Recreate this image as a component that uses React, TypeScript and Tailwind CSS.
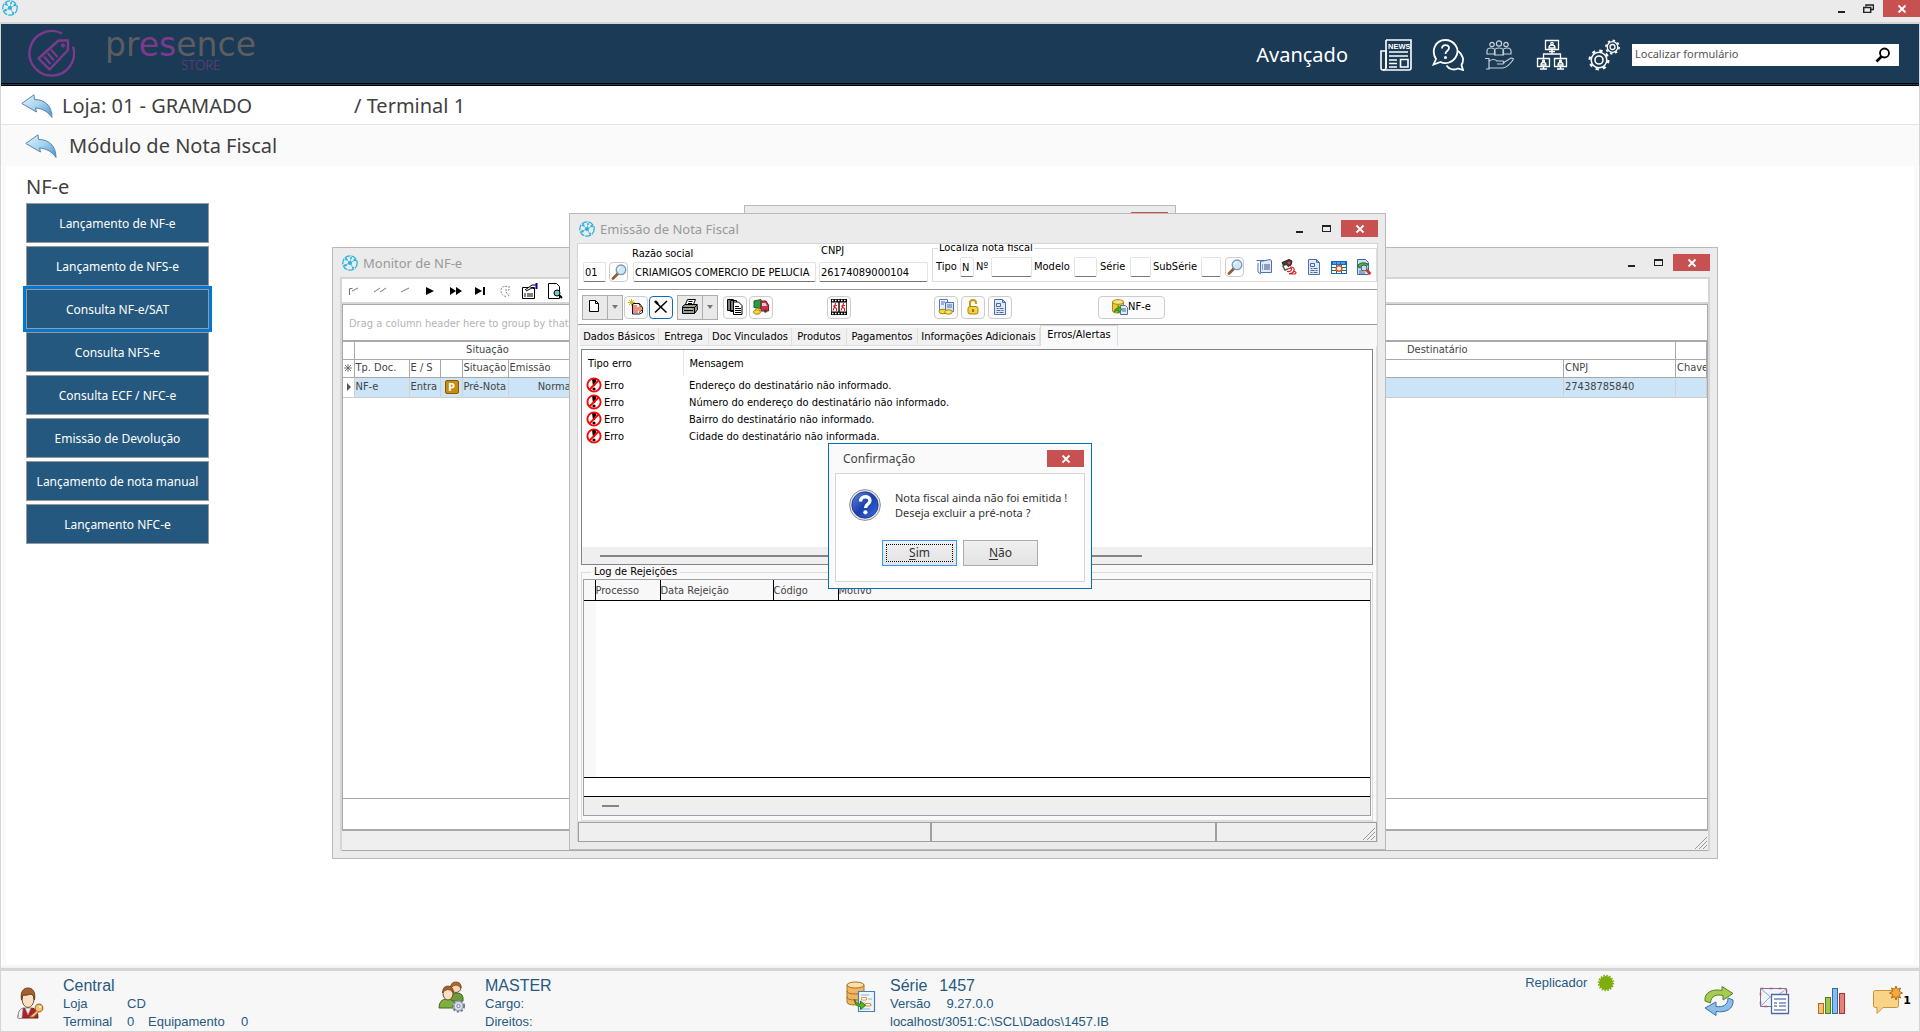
import type { ReactNode } from 'react';

interface WindowProps {
  title: string;
  className: string;
  children: ReactNode;
}

interface FieldProps {
  id: string;
  label: string;
  labelClass: string;
  inputClass: string;
  value?: string;
}

const menuItems = [
  'Lançamento de NF-e',
  'Lançamento de NFS-e',
  'Consulta NF-e/SAT',
  'Consulta NFS-e',
  'Consulta ECF / NFC-e',
  'Emissão de Devolução',
  'Lançamento de nota manual',
  'Lançamento NFC-e',
];

const tabs = [
  'Dados Básicos',
  'Entrega',
  'Doc Vinculados',
  'Produtos',
  'Pagamentos',
  'Informações Adicionais',
  'Erros/Alertas',
];

const errors = [
  'Endereço do destinatário não informado.',
  'Número do endereço do destinatário não informado.',
  'Bairro do destinatário não informado.',
  'Cidade do destinatário não informada.',
];

/* ---------- icons ---------- */

function AppIcon() {
  return (
    <svg className="w-4 h-4 shrink-0" viewBox="0 0 16 16" fill="none" stroke="#2bb3df">
      <circle cx="8" cy="8" r="7.2" strokeWidth="1.3" strokeDasharray="6 1" />
      <path d="M8 8 4 4M8 8l5-3M8 8l3 5M8 8l-5 2M8 8l1-5" strokeWidth="0.7" />
      <g fill="#2bb3df" stroke="none">
        <circle cx="8" cy="8" r="2.1" />
        <circle cx="4.2" cy="4.2" r="1.2" />
        <circle cx="12.8" cy="5" r="1.3" />
        <circle cx="11" cy="12.8" r="1.1" />
        <circle cx="3.4" cy="10.2" r="1.3" />
        <circle cx="9" cy="3" r="1" />
      </g>
    </svg>
  );
}

function TagLogo() {
  return (
    <svg className="w-12 h-12" viewBox="0 0 48 48" fill="none" stroke="#7d3a8c" strokeWidth="2.4">
      <path d="M35 4.5A22.3 22.3 0 1 0 46 17.5" />
      <path d="M11.5 29.500 31.500 11.500h9.500v9.500L22.500 40.500Z" strokeLinejoin="round" />
      <path d="m17 27.500 6.500 7.500M20.500 24l6.500 7.500M24 20.500l6.500 7.500" strokeWidth="2" />
      <circle cx="36" cy="16.500" r="0.900" />
    </svg>
  );
}

function BackArrow() {
  return (
    <svg className="w-8 h-6" viewBox="0 0 32 24">
      <defs>
        <linearGradient id="back" x1="0" y1="0" x2="1" y2="1">
          <stop offset="0" stopColor="#dff5fb" />
          <stop offset="0.5" stopColor="#a5d3ee" />
          <stop offset="1" stopColor="#4f8fc8" />
        </linearGradient>
      </defs>
      <path
        d="M.8 9.500 13 .8l.5 4.700C23 5.500 31 11 31 23.500 27 18 22 14.500 14.500 14l1 4Z"
        fill="url(#back)"
        stroke="#5b83b4"
        strokeLinejoin="round"
      />
    </svg>
  );
}

function NewsIcon() {
  return (
    <svg className="w-8 h-8" viewBox="0 0 32 32" fill="none" stroke="#fff" strokeWidth="1.6">
      <path d="M6 1h25v28q0 2-2 2H3q-2 0-2-2V12h5v17" />
      <path d="M6 1v28q0 2-3 2" />
      <text x="8" y="9.500" fontSize="7.500" fontWeight="700" fill="#fff" stroke="none" fontFamily="Liberation Sans, sans-serif">
        NEWS
      </text>
      <path d="M9 13h19M9 17h19M9 21h8M9 24.500h8M9 28h8M20.500 20.500H28V28h-7.500Z" />
    </svg>
  );
}

function HelpIcon() {
  return (
    <svg className="w-8 h-8" viewBox="0 0 32 32" fill="none" stroke="#fff" strokeWidth="1.8">
      <path d="M4 20C-1.500 11 4 1 13 1s16 9 10.500 17.500C20 24 13 25.500 8.500 23L1.500 25.500Z" />
      <path d="M26 12c5 3.500 6.500 9 3.500 14l1.500 5-5-1.500c-4 2-9 1-11.500-3" />
      <path d="M10 9.500c0-4.500 7-4.500 7-.5 0 3-3.500 2.500-3.500 6" />
      <circle cx="13.500" cy="18.500" r="0.7" fill="#fff" />
    </svg>
  );
}

function HandIcon() {
  return (
    <svg className="w-8 h-8" viewBox="0 0 32 32" fill="none" stroke="#c6d0d8" strokeWidth="1.2">
      <circle cx="8" cy="5.500" r="2.200" />
      <circle cx="15" cy="4.500" r="2.600" />
      <circle cx="22" cy="5.500" r="2.200" />
      <path d="M3 15v-3q0-3 4-3t4 3v3ZM19 15v-3q0-3 4-3t4 3v3ZM10.500 16v-4q0-3 4.500-3t4.500 3v4Z" />
      <path d="M1 19.500h4V30H2M5 22q5-3 8 0h6q2 2 0 3h-6M19 24l8-5q3 0 2 2-5 7-10 8H5" />
    </svg>
  );
}

function NetworkIcon() {
  return (
    <svg className="w-8 h-8" viewBox="0 0 32 32" fill="none" stroke="#fff" strokeWidth="1.3">
      <path d="M9.500 1.500h13v9h-13ZM1.500 19.500h12v8h-12ZM18.500 19.500h12v8h-12Z" />
      <path d="M16 11v4M7.500 19v-4h17v4M13 12.500h6M4 30h7M21 30h7M7.500 27.500V30M24.500 27.500V30" />
      <path d="M13 9q0-3 3-3t3 3ZM5 26q0-2.500 2.500-2.500T10 26ZM22 26q0-2.500 2.500-2.500T27 26Z" />
      <circle cx="16" cy="4.500" r="1.200" />
      <circle cx="7.500" cy="22" r="1" />
      <circle cx="24.500" cy="22" r="1" />
    </svg>
  );
}

function GearsIcon() {
  return (
    <svg className="w-8 h-8" viewBox="0 0 32 32" fill="none" stroke="#fff">
      <circle cx="11" cy="21" r="7.800" strokeWidth="1.500" />
      <circle cx="11" cy="21" r="9.400" strokeWidth="2.200" strokeDasharray="3.300 4.080" />
      <circle cx="11" cy="21" r="4" strokeWidth="1.600" />
      <circle cx="24.500" cy="8" r="5.300" strokeWidth="1.300" />
      <circle cx="24.500" cy="8" r="6.600" strokeWidth="1.600" strokeDasharray="2.400 2.780" />
      <circle cx="24.500" cy="8" r="2.500" strokeWidth="1.300" />
    </svg>
  );
}

function Lens() {
  return (
    <svg className="w-4 h-4" viewBox="0 0 16 16">
      <path d="m2 14.500 5-5" stroke="#9a5a2c" strokeWidth="2.800" strokeLinecap="round" />
      <path d="m5.500 10.500 1.800-1.800" stroke="#666" strokeWidth="2" />
      <circle cx="10" cy="5.800" r="4.800" fill="#c9e9fa" stroke="#8496ab" strokeWidth="1.300" />
      <path d="M7.500 5.500q0-2.500 2.500-2.500" stroke="#fff" fill="none" strokeWidth="1.200" />
    </svg>
  );
}

function DocIcon() {
  return (
    <svg className="w-4 h-4" viewBox="0 0 16 16">
      <path d="M2.500.5h8l3 3v12h-11Z" fill="#dfeafc" stroke="#4a70b5" />
      <path d="M10.500.5v3h3Z" fill="#8db1ec" stroke="#4a70b5" />
      <path d="M4.500 4.500h4v3h-4ZM4.500 9.500h2m1 0h4m-7 2h4m1 0h2m-7 2h2m1 0h4" stroke="#55658c" fill="none" />
    </svg>
  );
}

function CoinDocIcon() {
  return (
    <svg className="w-4 h-4" viewBox="0 0 16 16">
      <path d="M1.500.5h8v10h-8Z" fill="#e6effd" stroke="#5a7dbb" />
      <path d="M7.500 3.500h8v9h-8Z" fill="#d3e2fa" stroke="#4a70b5" />
      <path d="M3 3h4M3 5h3M9 6h5M9 8h5" stroke="#55709c" />
      <ellipse cx="5" cy="12.500" rx="4" ry="2.300" fill="#f5d84a" stroke="#a98608" />
      <ellipse cx="10.500" cy="13" rx="3.800" ry="2.200" fill="#f8e169" stroke="#a98608" />
    </svg>
  );
}

function PadlockIcon() {
  return (
    <svg className="w-4 h-4" viewBox="0 0 16 16">
      <path d="M5 7V4q0-3 3-3t3 3v1" fill="none" stroke="#c89b12" strokeWidth="2" />
      <rect x="3" y="7.500" width="10" height="7.500" rx="2" fill="#f4cf3e" stroke="#ad8410" />
      <path d="M8 10v3" stroke="#805c00" strokeWidth="1.500" />
    </svg>
  );
}

function DbDocIcon() {
  return (
    <svg className="w-4 h-4" viewBox="0 0 16 16">
      <path d="M.5 3v9q0 2 5 2t6-2V3Z" fill="#f1c62c" stroke="#a98608" />
      <ellipse cx="6" cy="3" rx="5.500" ry="2.300" fill="#fbe788" stroke="#a98608" />
      <path d="M8.500 6.500h5l2 2v7h-7Z" fill="#dfeafc" stroke="#4a70b5" />
      <path d="M10 10h4M10 12h4" stroke="#55658c" />
      <path d="M2 13q1-4 4-4V6.500l4 4-4 3.500v-2.500q-2 0-4 1.500Z" fill="#3eb03a" stroke="#17721a" strokeWidth="0.700" />
    </svg>
  );
}

function SheetsIcon() {
  return (
    <svg className="w-4 h-4" viewBox="0 0 16 16">
      <path d="M.5 1.500h10v1M2 4v9l3 2" fill="none" stroke="#4a70b5" />
      <path d="M4.500 2.500 14 .5l1.500 1v12h-11Z" fill="#dfeafc" stroke="#4a70b5" />
      <path d="M6 6h1M6 8h1M6 10h1M8 6h6M8 8h6M8 10h6" stroke="#444d7c" />
    </svg>
  );
}

function ScannerIcon() {
  return (
    <svg className="w-4 h-4" viewBox="0 0 16 16">
      <path d="M1 3.500 8 .5l3 1.500-1 4-3 1.500-1.500-2-3 1Z" fill="#4a4038" stroke="#222" />
      <circle cx="8" cy="4" r="1.300" fill="#f33" />
      <path d="M1.500 6.500 4 11l3-1" fill="none" stroke="#555" strokeWidth="1.500" />
      <path d="M7 10q4-2 3.500.5T6 12.500M9 8q5 0 4 3.500T8 14.500M12.500 12q4 1 1.500 3H8" fill="none" stroke="#d9232a" strokeWidth="1.200" />
    </svg>
  );
}

function CalendarIcon() {
  return (
    <svg className="w-4 h-4" viewBox="0 0 16 16">
      <rect x="0.500" y="2.500" width="15" height="12" fill="#fff" stroke="#0a6ccc" />
      <path d="M0 2h16v4H0Z" fill="#0a6ccc" />
      <path d="M2 4h3M6 4h3M10 4h4" stroke="#9fd0ff" />
      <path d="M1 8.500h14M1 11.500h14M5.500 6v8M10.500 6v8" stroke="#16783a" />
      <circle cx="8" cy="9.500" r="2.800" fill="#fff" stroke="#ef4d21" strokeWidth="1.500" />
    </svg>
  );
}

function SearchDocIcon() {
  return (
    <svg className="w-4 h-4" viewBox="0 0 16 16">
      <path d="M1.500.5h8l3 3v12h-11Z" fill="#cfe2fa" stroke="#3a68ae" />
      <path d="M2 6q4-4 10-1l-2 3Q6 6 3 9Z" fill="#4bb24a" stroke="#1d7022" />
      <path d="M3 12h4M3 14h6" stroke="#55658c" />
      <circle cx="8" cy="9" r="3" fill="#c8e3df" stroke="#456" />
      <path d="m10.500 11 4 4" stroke="#d6321f" strokeWidth="2.500" />
    </svg>
  );
}

function NewFileIcon() {
  return (
    <svg className="w-4 h-4" viewBox="0 0 16 16">
      <path d="M2.500 1.500h6l3 3v8h-9Z" fill="#fff" stroke="#000" />
      <path d="M8.500 1.500v3h3" fill="none" stroke="#000" />
    </svg>
  );
}

function EditIcon() {
  return (
    <svg className="w-4 h-4" viewBox="0 0 16 16">
      <path d="M4.500 4.500h7l3 4v5l-3 1.500h-7Z" fill="#fff" stroke="#111" />
      <path d="M5 7h4M5 9h6M5 11h6M5 13h5" stroke="#e01818" />
      <path d="m11 5 4 5-4 4" fill="#e9a25e" stroke="#111" strokeDasharray="1.500 1" />
      <path d="M3.500 0v7M0 3.500h7M1 1l5 5M6 1 1 6" stroke="#c4b800" strokeWidth="0.900" />
    </svg>
  );
}

function DeleteIcon() {
  return (
    <svg className="w-4 h-4" viewBox="0 0 16 16">
      <path d="M2 2.500 13.500 13.500M14 2 2 13.500" stroke="#000" strokeWidth="1.500" />
      <path d="m2 2 3 3" stroke="#000" strokeWidth="2.400" />
    </svg>
  );
}

function PrinterIcon() {
  return (
    <svg className="w-4 h-4" viewBox="0 0 16 16" stroke="#000">
      <path d="M5.500.5h8l-2.500 6H3Z" fill="#fff" />
      <path d="M.5 7.500 3 5.500h12l.5 5-3 4H.5Z" fill="#9a9a9a" />
      <path d="M.5 8.500h12l3-3M12.500 8.500v6M2 11.500h9M6.500 2.500h4M6 4.500h4" fill="none" />
      <path d="M7 10h3" stroke="#e6d800" />
    </svg>
  );
}

function CopiesIcon() {
  return (
    <svg className="w-4 h-4" viewBox="0 0 16 16" stroke="#000">
      <path d="M.5.5h6v11h-6ZM3.500 1.500h6v11h-6Z" fill="#fff" />
      <path d="M2 .5v11M5 2v10" />
      <path d="M6.500 3h5l3.500 3.500v9H6.500Z" fill="#fff" />
      <path d="M8 7.500h4M8 9.500h6M8 11.500h6M8 13.500h6" />
    </svg>
  );
}

function TruckIcon() {
  return (
    <svg className="w-4 h-4" viewBox="0 0 16 16">
      <path d="M1 2 8 .5v9L1 8.500Z" fill="#2c9b42" stroke="#166326" />
      <path d="M8 2h5l2.500 4v6H8Z" fill="#d8303a" stroke="#8c1820" />
      <path d="M9 4h3.500l1.500 3H9Z" fill="#bcd8f5" />
      <circle cx="12.500" cy="12" r="1.800" fill="#444" />
      <ellipse cx="4" cy="13" rx="3.500" ry="2.200" fill="#f7d548" stroke="#a98608" />
      <path d="M2 10.500 6 9v3" fill="#f7d548" stroke="#a98608" />
    </svg>
  );
}

function FilmIcon() {
  return (
    <svg className="w-4 h-4" viewBox="0 0 16 16">
      <path d="M0 0h16v16H0Z" fill="#000" />
      <path d="M.7 3.500h6.600v9H.7ZM8.700 3.500h6.600v9H8.700Z" fill="#fff" />
      <path d="M1 1.500h14M1 14.500h14" stroke="#fff" strokeWidth="1.500" strokeDasharray="1.500 1.500" />
      <path
        d="m4.500 4-1 4 2 1.500V12M3.500 8 2 11.500M2 7l4-.5M12.500 4l-1 4 2 1.500V12M11.500 8 10 11.500M10 7l4-.5"
        stroke="#e01414"
        strokeWidth="1.100"
        fill="none"
      />
    </svg>
  );
}

function ErrorIcon() {
  return (
    <svg className="w-4 h-4 shrink-0" viewBox="0 0 16 16">
      <path d="M6 2h4.500l-1.500 7H7Z" fill="#000" />
      <circle cx="8" cy="12" r="1.600" fill="#000" />
      <circle cx="8" cy="8" r="6.600" fill="none" stroke="#fb0505" strokeWidth="1.900" />
      <path d="m3.500 12.500 9-9" stroke="#fb0505" strokeWidth="1.800" />
    </svg>
  );
}

function QuestionIcon() {
  return (
    <svg className="w-8 h-8 shrink-0" viewBox="0 0 32 32">
      <defs>
        <linearGradient id="ask" x1="0" y1="0" x2="1" y2="1">
          <stop offset="0" stopColor="#5d8ae0" />
          <stop offset="0.5" stopColor="#1a3fae" />
          <stop offset="1" stopColor="#3f6fe0" />
        </linearGradient>
      </defs>
      <circle cx="16" cy="16" r="15.400" fill="#e7e9ee" stroke="#8d8f96" />
      <circle cx="16" cy="16" r="13.200" fill="url(#ask)" stroke="#1c2f86" strokeWidth="0.800" />
      <path d="M11.500 12.500c0-6.500 9.500-6 9.500-1 0 3.500-4.500 3.500-4.500 7.500" fill="none" stroke="#fff" strokeWidth="3.400" />
      <circle cx="16.400" cy="23.300" r="2.100" fill="#fff" />
    </svg>
  );
}

function KeyUserIcon() {
  return (
    <svg className="w-8 h-8" viewBox="0 0 32 32">
      <path d="M3 31q0-9 6-10l4 2 4-2q6 1 6 10Z" fill="#b3202c" stroke="#5e2320" />
      <path d="M3 31q0-9 5-10l-1 10M10 21l3 7 3-7Z" fill="#f0f0ee" stroke="#8a8a86" strokeWidth="0.700" />
      <ellipse cx="13" cy="12" rx="6" ry="8.500" fill="#f9dfc3" stroke="#7a4a2a" />
      <path d="M6.500 13C5 4 9 1 13 1s8 3 6.500 12Q19 8 16 7q-6 2-8 1Z" fill="#a4602f" stroke="#6b3b18" />
      <circle cx="24" cy="21" r="3.800" fill="#f4c578" stroke="#a3702a" strokeWidth="1.200" />
      <path d="m21.500 24-7 6h4l5-5" fill="#f4c578" stroke="#a3702a" />
      <circle cx="25" cy="20" r="1" fill="#fff" />
    </svg>
  );
}

function TeamIcon() {
  return (
    <svg className="w-8 h-8" viewBox="0 0 32 32">
      <path d="M12 20q1-8 8-8t6 8Z" fill="#6c9c35" stroke="#436b1c" />
      <circle cx="19" cy="6.500" r="5" fill="#f5d6b5" stroke="#7a4a2a" />
      <path d="M13.500 7q0-6 5.500-6t5 6q-3-3-5-3t-5.500 3Z" fill="#b06a33" stroke="#6b3b18" strokeWidth="0.700" />
      <path d="M2 27q0-9 8-9t9 9Z" fill="#7db03e" stroke="#436b1c" />
      <ellipse cx="11" cy="12.500" rx="5" ry="6.500" fill="#f9dfc3" stroke="#7a4a2a" />
      <path d="M5.500 12q0-7 5.500-7t5.500 7q-3-4-6-3.500T5.500 12Z" fill="#a4602f" stroke="#6b3b18" strokeWidth="0.700" />
      <circle cx="21.500" cy="25" r="5.500" fill="#dfe4ec" stroke="#6e7c94" strokeWidth="2.200" strokeDasharray="2.400 1.500" />
      <circle cx="21.500" cy="25" r="4.500" fill="#dfe4ec" stroke="#8794aa" />
      <circle cx="21.500" cy="25" r="1.700" fill="#fff" stroke="#6e7c94" />
    </svg>
  );
}

function DatabaseIcon() {
  return (
    <svg className="w-8 h-8" viewBox="0 0 32 32">
      <path d="M2 4v17q0 3 8.500 3t8.500-3V4Z" fill="#eeb562" stroke="#a97224" />
      <ellipse cx="10.500" cy="4" rx="8.500" ry="3" fill="#fbe0ae" stroke="#a97224" />
      <path d="M2 10q0 3 8.500 3t8.500-3M2 16q0 3 8.500 3t8.500-3" fill="none" stroke="#a97224" />
      <path d="M13.500 10.500h16v20h-16Z" fill="#eef4fd" stroke="#4b7cc0" strokeWidth="1.200" />
      <path d="M16 14h8M23 18h4M16 22h4M23 24h4M16 28h9" stroke="#8ab0de" />
      <path d="M16.500 16.500h5v2.500h-5ZM20.500 22.500h5V25h-5Z" fill="#fff" stroke="#e19a20" />
      <path d="M9.500 18q1 5 6 5v-3l5 4.500-5 4v-3q-6 0-6-7.500Z" fill="#59b72e" stroke="#2c7a14" />
    </svg>
  );
}

function RefreshIcon() {
  return (
    <svg className="w-8 h-8" viewBox="0 0 32 32">
      <path d="M2 16C1 7 10 3.500 19 5.500V1.500L30 8.500 20 15v-4.500C13 9 8 11 7.500 18Z" fill="#a5cb52" stroke="#56821d" />
      <path d="M30 15c1 9-7 13-17 11.500v4L2 23l11-6v4.500C20 22.500 25 20 25 13Z" fill="#8dbdea" stroke="#3a70ac" />
    </svg>
  );
}

function MailIcon() {
  return (
    <svg className="w-8 h-8" viewBox="0 0 32 32">
      <path d="M1.500 3.500h26v18h-26Z" fill="#f0f4fb" stroke="#5f7fb8" />
      <path d="M1.500 3.500h26v18h-26Z" fill="none" stroke="#d9493f" strokeWidth="1.500" strokeDasharray="3 6" />
      <path d="m2 4 12 10L27 4M2 21l9-9" fill="none" stroke="#8ea6cd" />
      <path d="M12.500 9.500h17v19h-17Z" fill="#fff" stroke="#5468a8" strokeWidth="1.300" />
      <path d="M15 14h12M15 18h3M20 18h7M15 21h3M20 21h7M15 25h12" stroke="#93a3cf" strokeWidth="1.800" />
    </svg>
  );
}

function ChartIcon() {
  return (
    <svg className="w-8 h-8" viewBox="0 0 32 32">
      <rect x="3.500" y="18.500" width="5" height="10" fill="#fbbf76" stroke="#b8691c" />
      <rect x="10.500" y="12.500" width="5" height="16" fill="#9cc84b" stroke="#4d7f17" />
      <rect x="17.500" y="3.500" width="5" height="25" fill="#86bdf0" stroke="#2f6caa" />
      <rect x="24.500" y="8.500" width="5" height="20" fill="#e8817a" stroke="#a8322c" />
    </svg>
  );
}

function CommentIcon() {
  return (
    <svg className="w-8 h-8" viewBox="0 0 32 32">
      <path d="M2.500 7.500q0-2 2-2h21q2 0 2 2v13q0 2-2 2H12L6 28.500v-6H4.500q-2 0-2-2Z" fill="#f9d387" stroke="#c8923c" />
      <path
        d="m25 1 1.300 3.200L29.500 3l-1.200 3.200L31.500 8l-3.200 1.500 1.200 3.500-3.200-1.500L25 15l-1.300-3.500L20.500 13l1.200-3.500L18.500 8l3.200-1.800L20.500 3l3.200 1.200Z"
        fill="#f2ab43"
        stroke="#b56a12"
      />
    </svg>
  );
}

/* ---------- shared pieces ---------- */

function CloseButton() {
  return (
    <button aria-label="Fechar" className="w-[37px] h-[17px] flex items-center justify-center bg-[#c75050]">
      <svg className="w-2.5 h-2.5" viewBox="0 0 10 10" stroke="#fff" strokeWidth="1.800">
        <path d="m1.500 1.500 7 7M8.500 1.500l-7 7" />
      </svg>
    </button>
  );
}

function AppWindow({ title, className, children }: WindowProps) {
  return (
    <section className={`absolute flex flex-col border border-[#bababa] bg-[#ebebeb] px-[7px] pb-[7px] ${className}`}>
      <header className="h-[29px] shrink-0 flex items-center justify-between">
        <div className="flex items-center gap-[5px] pl-0.5">
          <AppIcon />
          <h2 className="text-[13px] leading-4 text-[#999]">{title}</h2>
        </div>
        <div className="flex items-center">
          <button aria-label="Minimizar" className="w-[27px] h-[17px] flex items-end justify-center pb-1">
            <span className="w-[7px] h-0.5 bg-[#222]" />
          </button>
          <button aria-label="Maximizar" className="w-[27px] h-[17px] flex items-center justify-center">
            <span className="w-[9px] h-[7px] border border-t-2 border-[#222]" />
          </button>
          <div className="pl-px">
            <CloseButton />
          </div>
        </div>
      </header>
      {children}
    </section>
  );
}

function Field({ id, label, labelClass, inputClass, value = '' }: FieldProps) {
  return (
    <>
      <label htmlFor={id} className={`shrink-0 whitespace-nowrap leading-[14px] ${labelClass}`}>
        {label}
      </label>
      <input
        id={id}
        defaultValue={value}
        className={`h-5 shrink-0 px-px bg-white border border-[#e3e3e3] border-b-[#777] rounded-xs text-black ${inputClass}`}
      />
    </>
  );
}

function ToolButton({ label, className = '', children }: { label: string; className?: string; children: ReactNode }) {
  return (
    <button
      aria-label={label}
      className={`w-6 h-[23px] flex items-center justify-center border rounded bg-[#fcfcfc] ${className || 'border-[#ccc]'}`}
    >
      {children}
    </button>
  );
}

function SplitButton({ label, children }: { label: string; children: ReactNode }) {
  return (
    <div className="w-[41px] h-[25px] flex border border-[#adadad] bg-[#e9e9e9]">
      <button aria-label={label} className="w-[25px] flex items-center justify-center border-r border-[#adadad]">
        {children}
      </button>
      <button aria-label={`${label} opções`} className="flex-1 flex items-center justify-center">
        <svg className="w-1.5 h-1" viewBox="0 0 6 4">
          <path d="M0 0h6L3 4Z" fill="#777" />
        </svg>
      </button>
    </div>
  );
}

function Grip() {
  return (
    <svg className="w-3.5 h-3.5" viewBox="0 0 14 14" stroke="#999">
      <path d="M13 1 1 13M13 5l-8 8M13 9l-4 4" />
    </svg>
  );
}

/* ---------- windows ---------- */

function MonitorWindow() {
  return (
    <AppWindow title="Monitor de NF-e" className="left-[332px] top-[81px] w-[1386px] h-[612px]">
      <div className="flex-1 min-h-0 flex flex-col border-2 border-b-0 border-[#d5d5d5] bg-white font-['DejaVu_Sans_Condensed',Roboto,sans-serif] text-[11px] text-[#444]">
        <div className="h-[23px] shrink-0 flex items-center gap-[9px] pl-[5px]">
          <svg className="w-4 h-4" viewBox="0 0 16 16" stroke="#777" fill="none"><path d="M2.500 12V5.500h3M5 8l6-3" /></svg>
          <svg className="w-4 h-4" viewBox="0 0 16 16" stroke="#777" fill="none"><path d="m2 9 6-4M8 9l6-4" /></svg>
          <svg className="w-4 h-4" viewBox="0 0 16 16" stroke="#777" fill="none"><path d="m4 9 8-4" /></svg>
          <svg className="w-4 h-4" viewBox="0 0 16 16"><path d="m4 4 8 4-8 4Z" /></svg>
          <svg className="w-4 h-4" viewBox="0 0 16 16"><path d="m3 4 6 4-6 4ZM9 4l6 4-6 4Z" /></svg>
          <svg className="w-4 h-4" viewBox="0 0 16 16"><path d="m3 4 7 4-7 4ZM11 4h2v8h-2Z" /></svg>
          <svg className="w-4 h-4" viewBox="0 0 16 16" stroke="#888" fill="none"><path d="M10 3.500q-6-1-6 4t5 6M12 3v4H8M9 9l3 4" strokeDasharray="2 1" /></svg>
          <svg className="w-4 h-4" viewBox="0 0 16 16" stroke="#000" fill="#fff"><path d="M.5 4.500h12v11H.5Z" /><path d="M2 11h2m1 0h6M2 13h2m1 0h6M3 7l7-5h4M4 8l6-3 3 1" /><path d="M14.500 0v6" stroke="#00a" strokeWidth="2" /></svg>
          <svg className="w-4 h-4" viewBox="0 0 16 16" stroke="#000" fill="#fff"><path d="M1.500.5h8l3 3v12h-11Z" /><circle cx="10" cy="10" r="3" fill="#6cc" /><path d="m12 12 3 3" strokeWidth="2" /></svg>
        </div>
        <div className="flex-1 min-h-0 flex flex-col border-t-2 border-[#d5d5d5]">
          <div className="flex-1 min-h-0 flex flex-col overflow-hidden border border-b-0 border-[#a9a9a9]">
            <p className="h-[35px] shrink-0 pl-1.5 pt-[11px] leading-[16px] text-[#b4b4b4]">
              Drag a column header here to group by that column
            </p>
            <table className="w-full table-fixed border-collapse border-t-2 border-[#a9a9a9]">
              <colgroup>
                <col className="w-[11px]" />
                <col className="w-[55px]" />
                <col className="w-[31px]" />
                <col className="w-[22px]" />
                <col className="w-[46px]" />
                <col className="w-[66px]" />
                <col className="w-[47px]" />
                <col className="w-[578px]" />
                <col />
                <col className="w-[112px]" />
                <col className="w-[31px]" />
              </colgroup>
              <thead>
                <tr className="h-[18px] border-b border-[#a9a9a9] *:p-0 *:font-normal *:border-r *:border-[#a9a9a9]">
                  <th />
                  <th colSpan={6} className="pr-px">Situação</th>
                  <th />
                  <th colSpan={2}>Destinatário</th>
                  <th />
                </tr>
                <tr className="h-[18px] border-b border-[#a9a9a9] *:p-0 *:pl-px *:font-normal *:text-left *:border-r *:border-[#a9a9a9] *:whitespace-nowrap *:overflow-hidden">
                  <th>
                    <svg className="w-2 h-2" viewBox="0 0 8 8" stroke="#666">
                      <path d="M4 0v8M0 4h8M1 1l6 6M7 1 1 7" strokeWidth="0.900" />
                    </svg>
                  </th>
                  <th>Tp. Doc.</th>
                  <th>E / S</th>
                  <th />
                  <th>Situação</th>
                  <th>Emissão</th>
                  <th />
                  <th />
                  <th />
                  <th>CNPJ</th>
                  <th>Chave</th>
                </tr>
              </thead>
              <tbody>
                <tr className="h-5 bg-[#cce4f7] border-b border-[#ccc] *:p-0 *:pl-px *:border-r *:border-[#d0d0d0] *:whitespace-nowrap *:overflow-hidden">
                  <td className="bg-white">
                    <svg className="w-2 h-2" viewBox="0 0 8 8"><path d="m3 0 4 4-4 4Z" fill="#555" /></svg>
                  </td>
                  <td>NF-e</td>
                  <td>Entra</td>
                  <td>
                    <span className="mx-auto w-3.5 h-3.5 flex items-center justify-center rounded-xs border border-[#8a5a00] bg-[#c98a10] text-[10px] font-bold text-white">
                      P
                    </span>
                  </td>
                  <td>Pré-Nota</td>
                  <td className="text-right">Normal</td>
                  <td />
                  <td />
                  <td />
                  <td>27438785840</td>
                  <td />
                </tr>
              </tbody>
            </table>
            <div className="flex-1" />
            <div className="h-[31px] shrink-0 border-t border-[#a9a9a9]" />
          </div>
        </div>
        <div className="h-[22px] shrink-0 flex items-end justify-end border-y border-t-2 border-[#a9a9a9] bg-[#efefef]">
          <Grip />
        </div>
      </div>
    </AppWindow>
  );
}

function HeaderFields() {
  return (
    <div className="h-[46px] shrink-0 flex items-end pb-[7px] pl-[5px] border-b border-[#999] bg-white">
      <input
        aria-label="Código"
        defaultValue="01"
        className="w-[23px] h-5 px-px bg-white border border-[#e3e3e3] border-b-[#777] rounded-xs"
      />
      <button aria-label="Pesquisar empresa" className="ml-[3px] w-[19px] h-5 flex items-center justify-center rounded border border-[#ccc]">
        <Lens />
      </button>
      <div className="ml-[5px] w-[183px] flex flex-col">
        <Field id="razao" label="Razão social" labelClass="-ml-px pb-px" inputClass="w-full" value="CRIAMIGOS COMERCIO DE PELUCIA" />
      </div>
      <div className="ml-[3px] w-[109px] flex flex-col">
        <Field id="cnpj" label="CNPJ" labelClass="pb-1 pl-0.5" inputClass="w-full" value="26174089000104" />
      </div>
      <fieldset className="ml-1 flex-1 min-w-0 border border-[#dcdcdc]">
        <legend className="ml-[5px] px-px h-3.5 leading-[14px]">Localiza nota fiscal</legend>
        <div className="flex items-center pt-0.5 pb-1 pl-[3px]">
          <Field id="tipo" label="Tipo" labelClass="w-6" inputClass="w-[14px]" value="N" />
          <Field id="numero" label="Nº" labelClass="w-[17px] pl-0.5" inputClass="w-[41px]" />
          <Field id="modelo" label="Modelo" labelClass="w-[42px] pl-0.5" inputClass="w-[23px]" />
          <Field id="serie" label="Série" labelClass="w-[33px] pl-[3px]" inputClass="w-[21px]" />
          <Field id="subserie" label="SubSérie" labelClass="w-[50px] pl-0.5" inputClass="w-[20px]" />
          <button aria-label="Localizar" className="ml-1 w-[19px] h-5 flex items-center justify-center rounded border border-[#ccc]">
            <Lens />
          </button>
          <div className="flex-1 flex items-center justify-between pl-3 pr-1">
            <SheetsIcon />
            <ScannerIcon />
            <DocIcon />
            <CalendarIcon />
            <SearchDocIcon />
          </div>
        </div>
      </fieldset>
    </div>
  );
}

function InvoiceToolbar() {
  return (
    <div className="h-[35px] shrink-0 flex items-center pl-1 border-b border-[#999] bg-white">
      <SplitButton label="Novo"><NewFileIcon /></SplitButton>
      <div className="ml-px flex gap-px">
        <ToolButton label="Editar"><EditIcon /></ToolButton>
        <ToolButton label="Excluir" className="border-[#0a6cbf]"><DeleteIcon /></ToolButton>
      </div>
      <div className="ml-1">
        <SplitButton label="Imprimir"><PrinterIcon /></SplitButton>
      </div>
      <div className="ml-[5px] flex gap-[2px]">
        <ToolButton label="Copiar"><CopiesIcon /></ToolButton>
        <ToolButton label="Transporte"><TruckIcon /></ToolButton>
      </div>
      <div className="ml-[54px]">
        <ToolButton label="Corrigir"><FilmIcon /></ToolButton>
      </div>
      <div className="ml-[83px] flex gap-[3px]">
        <ToolButton label="Financeiro"><CoinDocIcon /></ToolButton>
        <ToolButton label="Liberar"><PadlockIcon /></ToolButton>
        <ToolButton label="Documento"><DocIcon /></ToolButton>
      </div>
      <button className="ml-[86px] w-[67px] h-[23px] flex items-center justify-center border border-[#ccc] rounded bg-[#fcfcfc]">
        <DbDocIcon />
        NF-e
      </button>
    </div>
  );
}

function InvoiceWindow() {
  return (
    <AppWindow title="Emissão de Nota Fiscal" className="left-[569px] top-[47px] w-[817px] h-[637px]">
      <div className="flex-1 min-h-0 flex flex-col overflow-hidden border border-b-0 border-[#d5d5d5] bg-[#f9f9f9] font-['DejaVu_Sans_Condensed',Roboto,sans-serif] text-[11px] text-black">
        <HeaderFields />
        <InvoiceToolbar />
        <div className="h-[21px] shrink-0 flex items-end pl-0.5">
          <div role="tablist" className="grid grid-cols-[79px_50px_83px_55px_71px_122px_78px] items-end">
            {tabs.map((tab) => (
              <button
                key={tab}
                role="tab"
                className={
                  tab === 'Erros/Alertas'
                    ? 'h-[21px] border border-b-0 border-[#dcdcdc] bg-[#f9f9f9] pb-px whitespace-nowrap'
                    : 'h-[18px] pt-px border-r border-b border-[#e0e0e0] bg-[#f1f1f1] whitespace-nowrap'
                }
              >
                {tab}
              </button>
            ))}
          </div>
        </div>
        <div className="flex-1 min-h-0 flex flex-col border-r border-b border-[#e0e0e0] px-[3px] pt-[3px]">
          <div className="h-[216px] shrink-0 flex flex-col border border-[#82828a] bg-white">
            <table className="w-full table-fixed text-left">
              <thead>
                <tr className="h-[26px] *:p-0 *:pl-1.5 *:pt-0.5 *:font-normal">
                  <th className="w-[101px] border-r border-[#e5e5e5]">Tipo erro</th>
                  <th>Mensagem</th>
                </tr>
              </thead>
              <tbody>
                {errors.map((message) => (
                  <tr key={message} className="h-[17px] *:p-0 leading-4">
                    <td>
                      <div className="h-4 pl-1 flex items-center gap-0.5">
                        <ErrorIcon />
                        <span className="pt-0.5">Erro</span>
                      </div>
                    </td>
                    <td>
                      <div className="h-4 pl-1.5 pt-px">{message}</div>
                    </td>
                  </tr>
                ))}
              </tbody>
            </table>
            <div className="mt-auto h-[17px] flex items-center px-[18px] bg-[#efefef]">
              <div className="w-[542px] h-0.5 bg-[#858585]" />
            </div>
          </div>
          <fieldset className="flex-1 min-h-0 min-w-0 border border-[#dcdce0] px-px pb-px">
            <legend className="ml-2 px-[3px] leading-[14px]">Log de Rejeições</legend>
            <div className="h-[237px] flex flex-col border border-[#a0a0a8] bg-white text-[#444]">
              <table className="w-full table-fixed text-left">
                <thead>
                  <tr className="h-5 bg-[#f8f8f8] border-b border-black *:p-0 *:pt-0.5 *:font-normal *:border-l *:border-black">
                    <th className="w-[11px] border-l-0!" />
                    <th className="w-[65px]">Processo</th>
                    <th className="w-[113px]">Data Rejeição</th>
                    <th className="w-[65px]">Código</th>
                    <th>Motivo</th>
                  </tr>
                </thead>
              </table>
              <div className="flex-1 flex border-b border-black">
                <div className="w-3 bg-[#f8f8f8]" />
              </div>
              <div className="h-[19px] border-b border-black" />
              <div className="h-[18px] flex items-center px-[18px] bg-[#efefef]">
                <div className="w-[17px] h-0.5 bg-[#858585]" />
              </div>
            </div>
          </fieldset>
        </div>
        <div className="h-[20px] shrink-0 grid grid-cols-[353px_285px_1fr] border border-[#a0a0a0] bg-[#efefef]">
          <div className="border-r-2 border-[#a0a0a0]" />
          <div className="border-r-2 border-[#a0a0a0]" />
          <div className="flex items-end justify-end"><Grip /></div>
        </div>
      </div>
    </AppWindow>
  );
}

function ConfirmDialog() {
  return (
    <section
      role="dialog"
      aria-label="Confirmação"
      className="absolute left-[828px] top-[277px] w-[264px] h-[146px] flex flex-col border border-[#0070bb] bg-[#fafafa] px-1.5 pb-1.5"
    >
      <header className="h-[29px] shrink-0 flex items-center justify-between pl-2 pr-px">
        <h2 className="text-xs leading-4 text-[#444]">Confirmação</h2>
        <CloseButton />
      </header>
      <div className="flex-1 flex flex-col border border-[#d5d5d5] bg-white">
        <div className="flex items-center gap-3.5 pt-[15px] pl-[13px]">
          <QuestionIcon />
          <p className="text-[11px] leading-[15px] text-[#333] whitespace-nowrap">
            Nota fiscal ainda não foi emitida !
            <br />
            Deseja excluir a pré-nota ?
          </p>
        </div>
        <div className="mt-[19px] flex justify-center gap-1.5 text-xs text-[#333]">
          <button className="w-[75px] h-[26px] p-[3px] border border-[#3399ff] bg-linear-to-b from-[#f0f0f0] to-[#e3e3e3]">
            <span className="h-full flex items-center justify-center border border-dotted border-black">
              <u className="underline-offset-2">S</u>im
            </span>
          </button>
          <button className="w-[75px] h-[26px] border border-[#acacac] bg-linear-to-b from-[#f0f0f0] to-[#e3e3e3]">
            <u className="underline-offset-2">N</u>ão
          </button>
        </div>
      </div>
    </section>
  );
}

/* ---------- page frame ---------- */

function TopBar() {
  return (
    <header className="h-[62px] mb-px shrink-0 flex items-center justify-between bg-[#1a3a55] border-b-[3px] border-double border-black pr-5">
      <div className="h-full flex items-start pt-[5px] pl-[26px]">
        <TagLogo />
        <div className="ml-[30px] pt-0.5 flex flex-col">
          <span className="font-['DejaVu_Sans',sans-serif] text-[33px] leading-7 text-[#5d5d60]">
            pr<span className="text-[#7d3a8c]">es</span>ence
          </span>
          <span className="pl-[76px] font-[Lato,sans-serif] text-[13px] leading-3 font-light text-[#7d3a8c]">STORE</span>
        </div>
      </div>
      <div className="flex items-center pt-0.5">
        <span className="text-xl leading-6 text-white mr-8">Avançado</span>
        <div className="flex items-center gap-5">
          <button aria-label="Notícias"><NewsIcon /></button>
          <button aria-label="Ajuda"><HelpIcon /></button>
          <button aria-label="Parceiros"><HandIcon /></button>
          <button aria-label="Rede"><NetworkIcon /></button>
          <button aria-label="Configurações"><GearsIcon /></button>
        </div>
        <div className="ml-3 w-[267px] h-[22px] flex items-center bg-white pl-[3px] pr-2">
          <input
            aria-label="Localizar formulário"
            placeholder="Localizar formulário"
            className="flex-1 text-[11px] text-[#444] placeholder:text-[#555] outline-none"
          />
          <svg className="w-4 h-4" viewBox="0 0 16 16" fill="none" stroke="#000">
            <circle cx="9.500" cy="6" r="4.500" strokeWidth="1.800" />
            <path d="m6.500 9.500-5 5" strokeWidth="2.600" />
          </svg>
        </div>
      </div>
    </header>
  );
}

function StatusFooter() {
  return (
    <footer className="h-[60px] shrink-0 flex bg-[#f7f7f7] font-['Liberation_Sans',Arial,sans-serif] text-[13px] leading-[18px] text-[#265a80]">
      <div className="w-[422px] flex pl-3.5 pt-1.5">
        <div className="w-12 pt-2.5"><KeyUserIcon /></div>
        <div>
          <p className="text-base leading-[18px]">Central</p>
          <p className="flex"><span className="w-16">Loja</span>CD</p>
          <p className="flex"><span className="w-16">Terminal</span><span className="w-[21px]">0</span><span className="w-[93px]">Equipamento</span>0</p>
        </div>
      </div>
      <div className="w-[408px] flex pl-3.5 pt-1.5">
        <div className="w-12 pt-1"><TeamIcon /></div>
        <div>
          <p className="text-base leading-[18px]">MASTER</p>
          <p>Cargo:</p>
          <p>Direitos:</p>
        </div>
      </div>
      <div className="flex-1 flex pl-3.5 pt-1.5">
        <div className="w-[45px] pt-1"><DatabaseIcon /></div>
        <div>
          <p className="text-base leading-[18px] flex gap-3"><span>Série</span><span>1457</span></p>
          <p className="flex gap-4"><span>Versão</span><span>9.27.0.0</span></p>
          <p>localhost/3051:C:\SCL\Dados\1457.IB</p>
        </div>
      </div>
      <div className="flex gap-[88px] pr-2">
        <p className="h-6 flex items-center gap-2.5">
          Replicador
          <svg className="w-[18px] h-[18px]" viewBox="0 0 18 18">
            <circle cx="9" cy="9" r="7" fill="#7eae0a" />
            <circle cx="9" cy="9" r="7.500" fill="none" stroke="#7aa80f" strokeWidth="1.500" strokeDasharray="1.500 1.450" />
          </svg>
        </p>
        <div className="flex items-center gap-6">
          <button aria-label="Atualizar"><RefreshIcon /></button>
          <button aria-label="Mensagens"><MailIcon /></button>
          <button aria-label="Gráficos"><ChartIcon /></button>
          <button className="flex items-center font-['DejaVu_Sans',sans-serif] text-[11px] font-bold text-black">
            <CommentIcon />1
          </button>
        </div>
      </div>
    </footer>
  );
}

export default function App() {
  return (
    <div className="w-full min-h-screen flex flex-col overflow-hidden bg-white font-['Noto_Sans',sans-serif]">
      <div className="h-6 shrink-0 flex items-start justify-between bg-[#ebebeb] border-b-2 border-[#d5d5d5] pl-0.5">
        <AppIcon />
        <div className="flex">
          <button aria-label="Minimizar" className="w-[27px] h-[17px] flex items-end justify-center pb-1">
            <span className="w-[7px] h-0.5 bg-[#222]" />
          </button>
          <button aria-label="Restaurar" className="w-[27px] h-[17px] flex items-center justify-center">
            <svg className="w-[11px] h-[9px]" viewBox="0 0 11 9" fill="none" stroke="#222">
              <path d="M3 2.500V1h7.500v4.500H8" strokeWidth="1.500" />
              <path d="M.7 3.500h7v5h-7Z" strokeWidth="1.500" />
            </svg>
          </button>
          <div className="pl-px"><CloseButton /></div>
        </div>
      </div>

      <div className="flex-1 flex flex-col border-x border-b border-[#d5d5d5]">
        <TopBar />

        <div className="h-[38px] shrink-0 flex items-center pl-5 border-b border-[#e3e3e3] text-xl text-[#3f3f3f]">
          <BackArrow />
          <span className="pl-[9px] w-[301px]">Loja: 01 - GRAMADO</span>
          <span>/ Terminal 1</span>
        </div>
        <div className="h-[41px] shrink-0 flex items-center gap-3 pl-6 bg-[#fafafa] text-xl text-[#3f3f3f]">
          <BackArrow />
          <h1>Módulo de Nota Fiscal</h1>
        </div>

        <main className="relative flex-1 mx-px border-x-4 border-b-2 border-[#fafafa] bg-white">
          <nav className="w-[183px] ml-5 pt-1.5">
            <h2 className="mb-px text-xl leading-[30px] text-[#3f3f3f]">NF-e</h2>
            <ul className="flex flex-col gap-[3px]">
              {menuItems.map((item) => (
                <li key={item}>
                  <button
                    className={`w-full h-10 block pt-0.5 border border-[#999] bg-[#25587e] text-xs text-white ${
                      item === 'Consulta NF-e/SAT' ? 'outline-3 outline-[#0078d7]' : ''
                    }`}
                  >
                    {item}
                  </button>
                </li>
              ))}
            </ul>
          </nav>

          {/* mdi desktop */}
          <div className="absolute -left-[6px] top-0">
            <div className="absolute left-[744px] top-[39px] w-[432px] h-[60px] border border-[#bababa] bg-[#ebebeb]">
              <div className="mt-1.5 ml-auto mr-[7px] w-[37px] h-[17px] bg-[#c75050]" />
            </div>
            <MonitorWindow />
            <InvoiceWindow />
            <ConfirmDialog />
          </div>
        </main>

        <div className="h-[5px] shrink-0 bg-[#d5d5d5] border-t-2 border-[#f3f3f3]" />
        <StatusFooter />
      </div>
    </div>
  );
}
